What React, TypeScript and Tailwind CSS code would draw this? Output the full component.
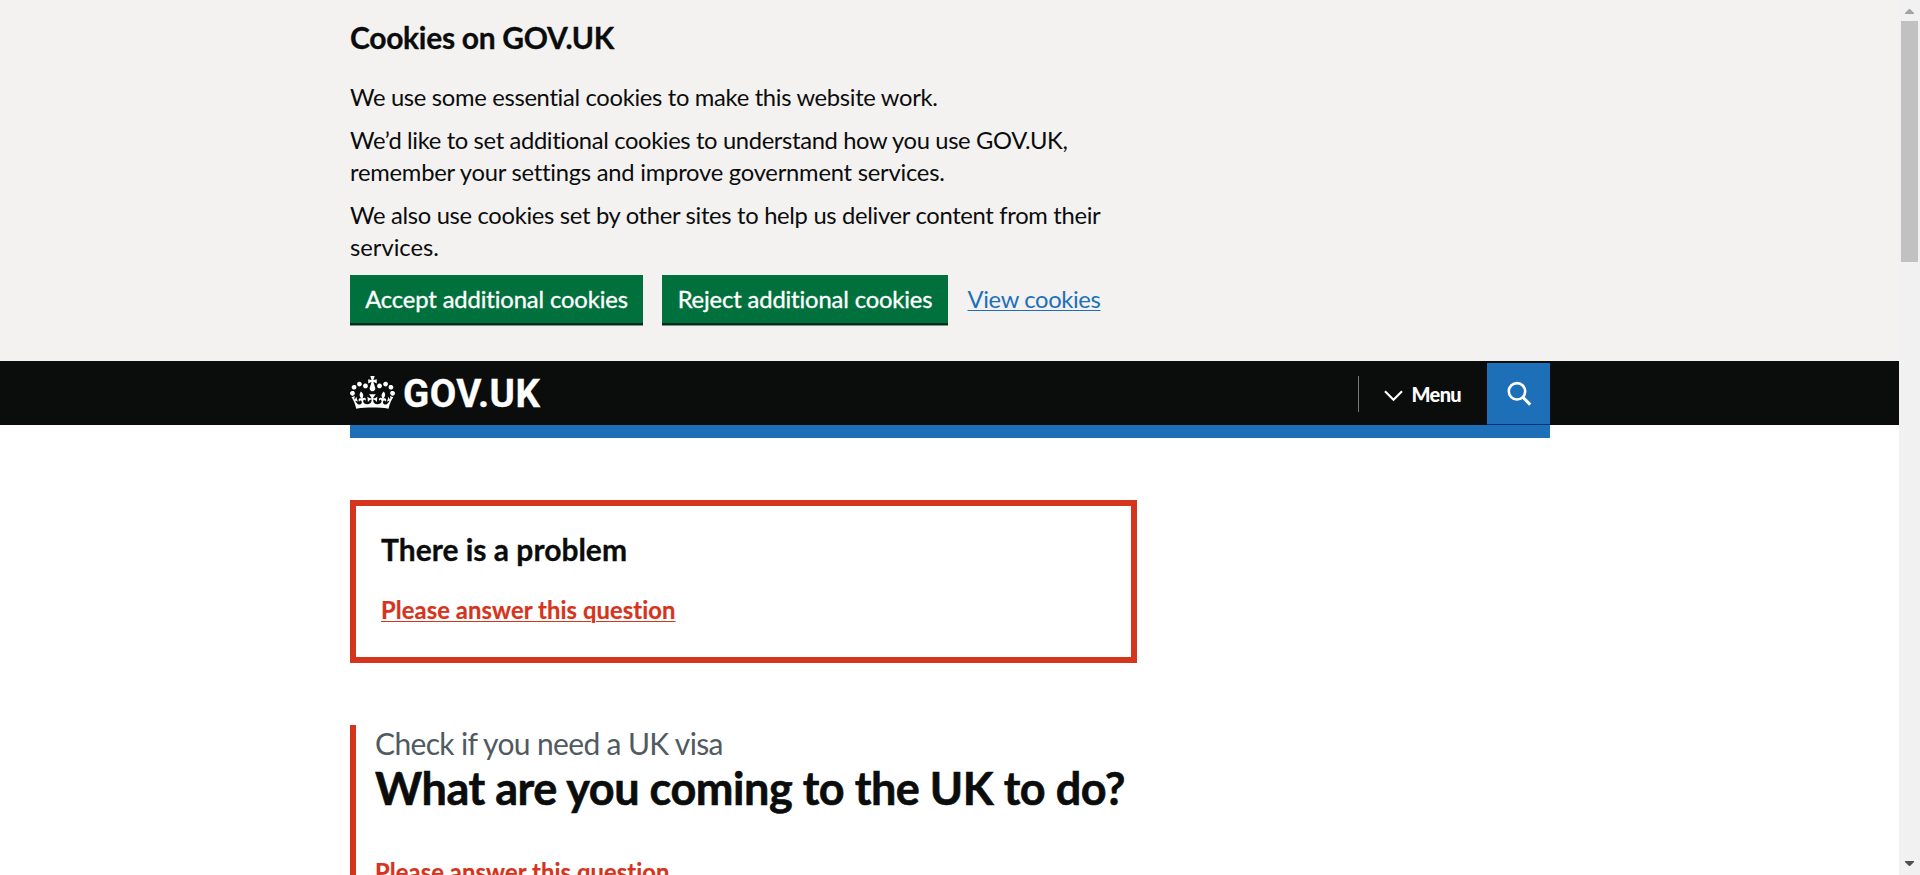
import type { ReactNode } from "react";

const CROWN =
  "M25 30.2c3.5 1.5 7.7-.2 9.1-3.7 1.5-3.6-.2-7.8-3.9-9.2-3.6-1.4-7.6.3-9.1 3.9-1.4 3.5.3 7.5 3.9 9zM9 39.5c3.6 1.5 7.8-.2 9.2-3.7 1.5-3.6-.2-7.8-3.9-9.1-3.6-1.5-7.6.2-9.1 3.8-1.4 3.5.3 7.5 3.8 9zM4.4 57.2c3.5 1.5 7.7-.2 9.1-3.8 1.5-3.6-.2-7.7-3.9-9.1-3.5-1.5-7.6.3-9.1 3.8-1.4 3.5.3 7.6 3.9 9.1zm38.3-21.4c3.5 1.5 7.7-.2 9.1-3.8 1.5-3.6-.2-7.7-3.9-9.1-3.6-1.5-7.6.3-9.1 3.8-1.3 3.6.4 7.7 3.9 9.1zm64.4-5.6c-3.6 1.5-7.8-.2-9.1-3.7-1.5-3.6.2-7.8 3.8-9.2 3.6-1.4 7.7.3 9.2 3.9 1.3 3.5-.4 7.5-3.9 9zm15.9 9.3c-3.6 1.5-7.7-.2-9.1-3.7-1.5-3.6.2-7.8 3.7-9.1 3.6-1.5 7.7.2 9.2 3.8 1.5 3.5-.3 7.5-3.8 9zm4.7 17.7c-3.6 1.5-7.8-.2-9.2-3.8-1.5-3.6.2-7.7 3.9-9.1 3.6-1.5 7.7.3 9.2 3.8 1.3 3.5-.4 7.6-3.9 9.1zM89.3 35.8c-3.6 1.5-7.8-.2-9.2-3.8-1.4-3.6.2-7.7 3.9-9.1 3.6-1.5 7.7.3 9.2 3.8 1.4 3.6-.3 7.7-3.9 9.1zM69.7 17.7l8.9 4.7V9.3l-8.9 2.8c-.2-.3-.5-.6-.9-.9L72.4 0H59.6l3.5 11.2c-.3.3-.6.5-.9.9l-8.8-2.8v13.1l8.8-4.7c.3.3.6.7.9.9l-5 15.4v.1c-.2.8-.4 1.6-.4 2.4 0 4.1 3.1 7.5 7 8.1h.2c.3 0 .7.1 1 .1.4 0 .7 0 1-.1h.2c4-.6 7.1-4.1 7.1-8.1 0-.8-.1-1.7-.4-2.4V34l-5.1-15.4c.4-.2.7-.6 1-.9zM66 92.8c16.9 0 32.8 1.1 47.1 3.2 4-16.9 8.9-26.7 14-33.5l-9.6-3.4c1 4.9 1.1 7.2 0 10.2-1.5-1.4-3-4.3-4.2-8.7L108.6 76c2.8-2 5-3.2 7.5-3.3-4.4 9.4-10 11.9-13.6 11.2-4.3-.8-6.3-4.6-5.6-7.9 1-4.7 5.7-5.9 8-.5 4.3-8.7-3-11.4-7.6-8.8 7.1-7.2 7.9-13.5 2.1-21.1-8 6.1-8.1 12.3-4.5 20.8-4.7-5.4-12.1-2.5-9.5 6.2 3.4-5.2 7.9-2 7.2 3.1-.6 4.3-6.4 7.8-13.5 7.2-10.3-.9-10.9-8-11.2-13.8 2.5-.5 7.1 1.8 11 7.3L80.2 60c-4.1 4.4-8 5.3-12.3 5.4 1.4-4.4 8-11.6 8-11.6H55.5s6.4 7.2 7.9 11.6c-4.2-.1-8-1-12.3-5.4l1.4 16.4c3.9-5.5 8.5-7.7 10.9-7.3-.3 5.8-.9 12.8-11.1 13.8-7.2.6-12.9-2.9-13.5-7.2-.7-5 3.8-8.3 7.1-3.1 2.7-8.7-4.6-11.6-9.4-6.2 3.7-8.5 3.6-14.7-4.6-20.8-5.8 7.6-5 13.9 2.2 21.1-4.7-2.6-11.9.1-7.7 8.8 2.3-5.5 7.1-4.2 8.1.5.7 3.3-1.3 7.1-5.7 7.9-3.5.7-9-1.8-13.5-11.2 2.5.1 4.7 1.3 7.5 3.3l-4.7-15.4c-1.2 4.4-2.7 7.2-4.3 8.7-1.1-3-.9-5.3 0-10.2l-9.5 3.4c5 6.9 9.9 16.7 14 33.5 14.8-2.1 30.8-3.2 47.7-3.2z";

function GreenButton({ className, children }: { className: string; children: ReactNode }) {
  return (
    <button
      type="button"
      className={`flex h-12 shrink-0 justify-center bg-[#00703c] pt-[9px] text-white shadow-[0_2px_0_#002d18,0_3px_0_#7a948a] [-webkit-text-stroke:0.35px_white] ${className}`}
    >
      {children}
    </button>
  );
}

function CookieBanner() {
  return (
    <section className="flex h-[361px] flex-col bg-[#f3f2f1] pt-[18px] pl-[350px]">
      <h2 className="mb-[25.5px] text-[30px] leading-[38px] font-bold tracking-[-0.3px] [-webkit-text-stroke:0.3px_#0b0c0c]">
        Cookies on GOV.UK
      </h2>
      <div className="flex flex-col gap-[12.5px] text-[23.75px] leading-[31.25px] whitespace-nowrap">
        <p className="tracking-[-0.31px]">We use some essential cookies to make this website work.</p>
        <p>
          <span className="tracking-[-0.355px]">We’d like to set additional cookies to understand how you use GOV.UK,</span>
          <br />
          <span className="tracking-[-0.23px]">remember your settings and improve government services.</span>
        </p>
        <p>
          <span className="tracking-[-0.31px]">We also use cookies set by other sites to help us deliver content from their</span>
          <br />
          <span className="tracking-[-0.02px]">services.</span>
        </p>
        <div className="-mt-[0.25px] flex">
          <GreenButton className="w-[293px] tracking-[-0.11px]">Accept additional cookies</GreenButton>
          <GreenButton className="ml-[19px] w-[286px] tracking-[-0.13px]">Reject additional cookies</GreenButton>
          <a
            href="#"
            className="ml-[19.5px] pt-[9px] tracking-[-0.34px] text-[#1d70b8] underline decoration-1 underline-offset-[2px]"
          >
            View cookies
          </a>
        </div>
      </div>
    </section>
  );
}

function SiteHeader() {
  return (
    <header className="h-[77px]">
      <div className="flex h-16 bg-[#0b0c0c] pl-[350px] text-white">
        <div className="flex w-[1200px]">
          <a href="#" className="flex pt-[15px]">
            <svg viewBox="0 0 132 97" className="h-[33px] w-[45px]" fill="#fff">
              <path d={CROWN} />
            </svg>
            <span className="ml-[8px] pt-px font-[Roboto] text-[38.5px] leading-[34px] font-bold tracking-[0.5px] [-webkit-text-stroke:0.3px_white]">
              GOV.UK
            </span>
          </a>
          <div className="mt-[15px] ml-auto h-9 w-px bg-[#75797c]" />
          <button type="button" className="flex pt-[21px] pl-[25px]">
            <svg viewBox="0 0 19 12" className="mt-[8px] h-3 w-[19px]" fill="none" stroke="#fff" strokeWidth="2.1">
              <path d="M1 1.2 9.5 9.8 18 1.2" />
            </svg>
            <span className="ml-[8.5px] w-[75.5px] text-left text-[20px] leading-6 font-black tracking-[-0.65px]">Menu</span>
          </button>
          <button type="button" className="mt-[2px] flex h-[62px] w-[63px] border-b border-[#003078] bg-[#1d70b8]">
            <svg viewBox="0 0 27 27" className="mt-[17px] ml-[19px] size-[27px]" fill="none" stroke="#fff" strokeWidth="2.6">
              <circle cx="11" cy="11.3" r="8.2" />
              <path d="m16.8 17.2 7.4 7.4" strokeWidth="3" />
            </svg>
          </button>
        </div>
      </div>
      <div className="ml-[350px] h-[13px] w-[1200px] bg-[#1d70b8]" />
    </header>
  );
}

function Scrollbar() {
  return (
    <div className="flex h-full w-[21px] flex-col items-center justify-between bg-[#f1f1f1]">
      <div className="flex flex-col items-center">
        <svg viewBox="0 0 9 5" className="mt-[9px] h-[5px] w-[9px]" fill="#a3a3a3">
          <path d="M0 5V4L4 0h1l4 4v1z" />
        </svg>
        <div className="mt-[7px] h-[241px] w-[17px] bg-[#c1c1c1]" />
      </div>
      <svg viewBox="0 0 9 5" className="mb-[9px] h-[5px] w-[9px]" fill="#505050">
        <path d="M0 0v1l4 4h1l4-4V0z" />
      </svg>
    </div>
  );
}

export default function App() {
  return (
    <div className="flex h-[875px] w-[1920px] overflow-hidden bg-white font-[Lato,sans-serif] text-[#0b0c0c]">
      <div className="h-full w-[1899px] overflow-hidden">
        <CookieBanner />
        <SiteHeader />
        <main className="pl-[350px]">
          <div className="mt-[62px] h-[163px] w-[787px] border-[6px] border-[#d4351c] pt-[24px] pl-[25px]">
            <h2 className="text-[30px] leading-[38px] font-bold [-webkit-text-stroke:0.3px_#0b0c0c]">There is a problem</h2>
            <a
              href="#"
              className="mt-[26.5px] block text-[23.75px] leading-[31px] font-bold tracking-[0.09px] text-[#d4351c] underline decoration-1 underline-offset-[2px] [-webkit-text-stroke:0.2px_#d4351c]"
            >
              Please answer this question
            </a>
          </div>
          <div className="mt-[62px] border-l-[6px] border-[#d4351c] pl-[19px]">
            <p className="pt-px text-[30px] leading-[35px] tracking-[-0.65px] text-[#505a5f]">Check if you need a UK visa</p>
            <h1 className="text-[45px] leading-[54px] font-bold tracking-[-0.46px] [-webkit-text-stroke:0.6px_#0b0c0c]">
              What are you coming to the UK to do?
            </h1>
            <p className="mt-[42px] text-[23.75px] leading-[31px] font-bold tracking-[0.09px] text-[#d4351c] [-webkit-text-stroke:0.2px_#d4351c]">
              Please answer this question
            </p>
          </div>
        </main>
      </div>
      <Scrollbar />
    </div>
  );
}
